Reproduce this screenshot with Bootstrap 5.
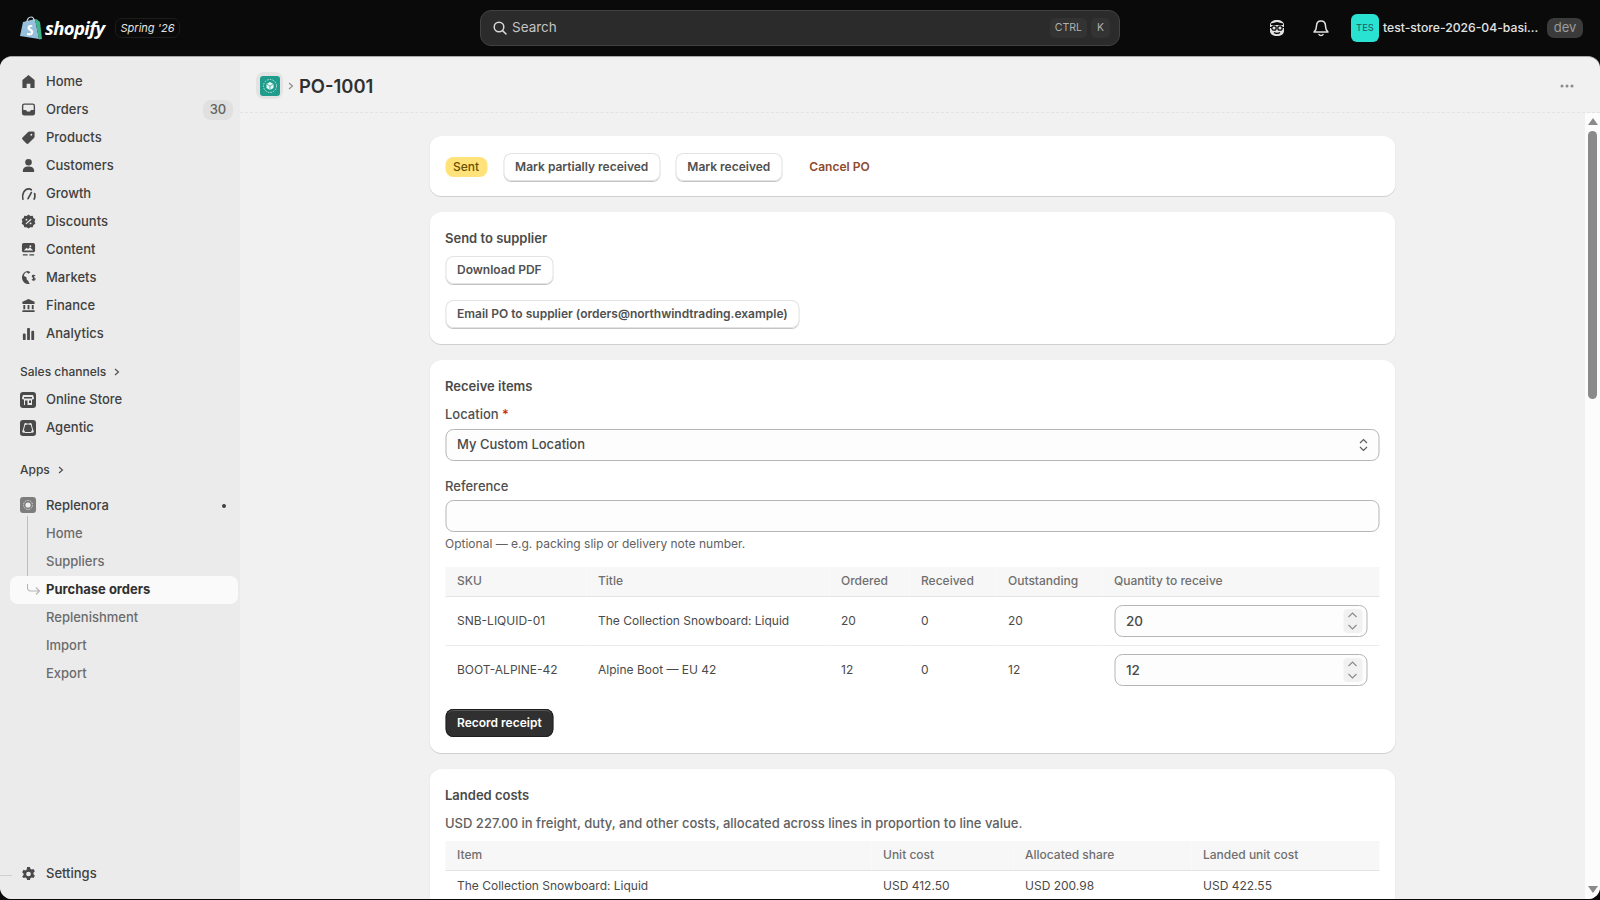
<!DOCTYPE html>
<html lang="en">
<head>
    <meta charset="UTF-8">
    <title>PO-1001</title>
    <link rel="stylesheet" href="https://cdn.jsdelivr.net/npm/bootstrap@5.3.0/dist/css/bootstrap.min.css">
    <style>
        html, body { height: 100%; overflow: hidden; }
        body { background: #0a0a0a; font-family: Inter, "Liberation Sans", sans-serif; font-size: 13px; color: #303030; }

        .topbar { height: 56px; padding: 0 17px 0 20px; color: #e3e3e3; }
        .logo-bag { width: 22px; height: 24px; }
        .logo-word { width: 62px; margin-left: 3px; font-family: "Open Sans", sans-serif; font-weight: 700; font-style: italic; font-size: 18.5px; letter-spacing: -.6px; color: #fff; line-height: 1; }
        .season-pill { width: 65px; height: 20px; margin-left: 8px; border: 1px solid #1c1c1c; border-radius: 7px; font-size: 11px; font-style: italic; color: #e3e3e3; }
        .search-wrap { left: 480px; top: 10px; width: 640px; height: 36px; background: #2b2b2b; border: 1px solid #424242; border-radius: 11px; padding: 0 9px 0 12px; color: #c4c4c4; font-size: 13.5px; line-height: 1; }
        .search-key { height: 20px; padding: 0 5px; background: #333; border-radius: 5px; font-size: 10.5px; color: #b0b0b0; }
        .top-icon { width: 18px; height: 18px; }
        .store-tile { width: 28px; height: 28px; background: #2ae2d2; border-radius: 6px; font-size: 9.5px; color: #23585a; }
        .store-name { width: 155px; margin-left: 4px; font-size: 12.2px; font-weight: 500; white-space: nowrap; }
        .dev-pill { width: 36px; height: 20px; margin-left: 9px; background: #3b3b3b; border-radius: 7px; color: #9c9c9c; font-size: 13px; }

        .frame { height: 843px; background: #f1f1f1; border-top: 1px solid #a8a8a8; border-radius: 12px; overflow: hidden; }
        .side { width: 240px; flex: none; background: #ebebeb; padding-top: 10.5px; position: relative; }
        .side::after { content: ""; position: absolute; left: 0; bottom: 23px; width: 12px; height: 1px; background: #cfcfcf; }
        .side-link { height: 28px; flex: none; padding-left: 21px; font-weight: 500; color: #404040; line-height: 1; text-decoration: none; }
        .side-icon { width: 15px; height: 15px; margin-right: 10px; flex: none; color: #4a4a4a; }
        .side-tile { width: 16px; height: 16px; margin-left: -1px; margin-right: 10px; flex: none; }
        .side-count { right: 7px; top: 4px; width: 30px; height: 20px; background: #e0e0e0; border-radius: 8px; color: #616161; }
        .side-head { padding-left: 20px; font-size: 12px; font-weight: 500; color: #404040; height: 20px; flex: none; }
        .sub-link { height: 28px; flex: none; padding-left: 46px; color: #6b6b6b; font-weight: 450; text-decoration: none; }
        .sub-active { margin: 0 2px 0 10px; padding-left: 36px; background: #fafafa; border-radius: 8px; color: #303030; font-weight: 650; }
        .tree-line { left: 27px; top: 25px; width: 1px; height: 69px; background: #bdbdbd; }
        .tree-arrow { left: 17px; top: 8px; width: 14px; height: 14px; }
        .side-dot { right: 14px; top: 13px; width: 4px; height: 4px; background: #404040; border-radius: 50%; }
        .side-foot { margin-top: 171px; }

        .page-head { height: 56px; flex: none; border-bottom: 1px dashed #e3e3e3; padding: 2px 26px 0 16px; }
        .app-tile { width: 27px; height: 27px; background: #e3e3e3; border-radius: 8px; }
        .crumb-sep { margin: 0 5px; }
        .page-title { font-size: 18.4px; font-weight: 600; color: #303030; line-height: 1; margin: 1px 0 0; }

        .scroll-area { min-width: 0; overflow: hidden; }
        .paper-col { width: 966px; margin: 23px auto 0; transform: translateX(-.5px); }
        .panel { background: #fff; border-radius: 12px; box-shadow: 0 1px 0 #d0d0d0, 0 0 1px rgba(0,0,0,.06); padding: 17px 16px 16px; margin-bottom: 16px; }
        .panel-title { font-size: 13px; font-weight: 600; color: #4a4a4a; line-height: 18px; margin: 0; }
        .po-btn { height: 28px; padding: 0 12px; background: #fff; border: 0; border-radius: 8px; font-size: 12px; font-weight: 600; color: #505050; box-shadow: inset 0 0 0 1px #e3e3e3, 0 1px 0 #c4c4c4; }
        .po-btn-dark { background: #303030; color: #fff; box-shadow: inset 0 0 0 1px #1f1f1f, inset 0 2px 0 #555; }
        .sent-tag { height: 20px; padding: 0 8px; background: #ffe37a; border-radius: 8px; font-size: 12px; font-weight: 500; color: #6a4f00; }
        .cancel-link { font-size: 12px; font-weight: 600; color: #8e4a2c; }
        .field-label { font-size: 13px; color: #4f4f4f; font-weight: 450; line-height: 18px; }
        .cost-note { color: #616161; }
        .field-box { height: 32px; background: #fdfdfd; border: 1px solid #b5b5b5; border-radius: 8px; padding: 0 11px; color: #4a4a4a; font-weight: 450; }
        .help-line { font-size: 12px; color: #616161; line-height: 16px; }
        .po-table { width: 100%; border-collapse: collapse; font-size: 12px; color: #4a4a4a; table-layout: fixed; }
        .po-table th { background: #f7f7f7; height: 29px; border-bottom: 1px solid #e3e3e3; padding: 0 12px; font-weight: 550; color: #6f6f6f; }
        .po-table td { border-bottom: 1px solid #ebebeb; padding: 8px 12px; line-height: 18px; }
        .po-table tr:last-child td { border-bottom: 0; }
        .cost-table td { padding: 6px 12px; }
        .qty-box { height: 32px; font-size: 13.5px; }
        .qty-spin { right: 4px; top: 3px; width: 19px; height: 24px; background: #f1f1f1; border-radius: 4px; }

        .fake-scroll { width: 15px; flex: none; background: #fcfcfc; padding: 5px 0 6px; }
        .scroll-thumb { width: 9px; height: 268px; margin-top: 6px; background: #8a8a8a; border-radius: 5px; }
    </style>
</head>
<body>
    <header class="topbar position-relative d-flex align-items-center">
        <svg class="logo-bag" viewBox="0 0 22 24">
            <path d="M3 6 15 3l4 20-19-3z" fill="#95bfdc"/>
            <path d="M15 3l2 .5 3 2.500 2 17-3 .5z" fill="#3fb58a"/>
            <path d="M7 6c0-3 2-5 4-5s3 2 3 4" fill="none" stroke="#c9d9e2" stroke-width="1.200"/>
            <path d="M12.500 9.500c-2.500-1-5 0-5 2.500 0 2.500 3.500 2.500 3.500 4.200 0 1.300-2 1.500-3.500.5l-.7 2c2.500 1.500 6.500.7 6.500-2.700 0-3-3.500-3-3.500-4.500 0-.8 1.200-1 2.300-.4z" fill="#fff"/>
        </svg>
        <span class="logo-word">shopify</span>
        <span class="season-pill d-flex align-items-center justify-content-center">Spring '26</span>

        <div class="search-wrap position-absolute d-flex align-items-center">
            <svg width="14" height="14" viewBox="0 0 14 14" fill="none" stroke="#d8d8d8" stroke-width="1.500"><circle cx="6" cy="6" r="4.800"/><path d="M9.600 9.600 13 13" stroke-linecap="round"/></svg>
            <span style="margin-left:5px">Search</span>
            <span class="search-key d-flex align-items-center ms-auto">CTRL</span>
            <span class="search-key d-flex align-items-center ms-1" style="padding:0 6px">K</span>
        </div>

        <div class="d-flex align-items-center ms-auto">
            <svg class="top-icon" viewBox="0 0 18 18">
                <path d="M2 6c0-3 3-5 7-5s7 2 7 5v6c0 3-3 5-7 5s-7-2-7-5z" fill="#e3e3e3"/>
                <path d="M3 4.500 9 3l6 1.500V6H3z" fill="#0a0a0a"/>
                <circle cx="6" cy="9" r="2.200" fill="#e3e3e3" stroke="#0a0a0a" stroke-width="1.300"/>
                <circle cx="12" cy="9" r="2.200" fill="#e3e3e3" stroke="#0a0a0a" stroke-width="1.300"/>
                <path d="M2 8.500h2M14 8.500h2" stroke="#0a0a0a" stroke-width="1.200"/>
                <path d="M6 13.500c1.500 1.300 4.500 1.300 6 0" fill="none" stroke="#0a0a0a" stroke-width="1.300"/>
            </svg>
            <svg class="top-icon" style="margin-left:26px" viewBox="0 0 18 18" fill="none" stroke="#e3e3e3" stroke-width="1.500" stroke-linejoin="round">
                <path d="M9 2c-3 0-4.500 2.300-4.500 5 0 3-.8 4.500-2.500 6h14c-1.700-1.500-2.500-3-2.500-6 0-2.700-1.500-5-4.500-5z"/>
                <path d="M7 15.500c.6 1.300 3.400 1.300 4 0" stroke-linecap="round"/>
            </svg>
            <span class="store-tile d-flex align-items-center justify-content-center" style="margin-left:21px">TES</span>
            <span class="store-name">test-store-2026-04-basi...</span>
            <span class="dev-pill d-flex align-items-center justify-content-center">dev</span>
        </div>
    </header>

    <div class="frame d-flex">
        <nav class="side d-flex flex-column">
            <a class="side-link d-flex align-items-center">
                <svg class="side-icon" viewBox="0 0 16 16" fill="currentColor"><path d="M8 1 1.500 6.500V14a1 1 0 0 0 1 1H6v-4.500h4V15h3.500a1 1 0 0 0 1-1V6.500z"/></svg>Home</a>
            <a class="side-link d-flex align-items-center position-relative">
                <svg class="side-icon" viewBox="0 0 16 16"><path fill="currentColor" fill-rule="evenodd" d="M3.500 1.500h9a2.500 2.500 0 0 1 2.500 2.500v8a2.500 2.500 0 0 1-2.500 2.500h-9A2.500 2.500 0 0 1 1 12V4a2.500 2.500 0 0 1 2.500-2.500zm0 1.500a1 1 0 0 0-1 1v4.500H5c.5 0 .8.300 1 .8l.3.700h3.400l.3-.7c.2-.5.5-.8 1-.8h2.500V4a1 1 0 0 0-1-1z"/></svg>Orders<span class="side-count position-absolute d-flex align-items-center justify-content-center">30</span></a>
            <a class="side-link d-flex align-items-center">
                <svg class="side-icon" viewBox="0 0 16 16" fill="currentColor"><path fill-rule="evenodd" d="M9 1.500h4a1.500 1.500 0 0 1 1.500 1.500v4c0 .5-.2 1-.6 1.400l-6 6a1.500 1.500 0 0 1-2.100 0l-4.200-4.200a1.500 1.500 0 0 1 0-2.100l6-6C8 1.700 8.500 1.500 9 1.500zM11 4a1 1 0 1 0 0 2 1 1 0 0 0 0-2z"/></svg>Products</a>
            <a class="side-link d-flex align-items-center">
                <svg class="side-icon" viewBox="0 0 16 16" fill="currentColor"><circle cx="8" cy="4.500" r="3.500"/><path d="M2 15v-1.500C2 10.500 4.500 9 8 9s6 1.500 6 4.500V15z"/></svg>Customers</a>
            <a class="side-link d-flex align-items-center">
                <svg class="side-icon" viewBox="0 0 16 16" fill="none" stroke="currentColor" stroke-width="1.800" stroke-linecap="round"><path d="M2 14C.8 9 3.500 3 8 3c1.300 0 2.300.4 3 1"/><path d="M14.500 8c.5 2 .3 4.500-.5 6"/><path d="M7.500 13.500 11 7"/></svg>Growth</a>
            <a class="side-link d-flex align-items-center">
                <svg class="side-icon" viewBox="0 0 16 16" fill="currentColor"><path fill-rule="evenodd" d="M8 .500l2 1.500 2.500-.2.700 2.500 2.100 1.300-.8 2.400.8 2.400-2.100 1.300-.7 2.500-2.500-.2-2 1.500-2-1.500-2.500.2-.7-2.500L.7 10.400 1.500 8 .7 5.600l2.100-1.300.7-2.500 2.500.2zM5.800 5a1 1 0 1 0 0 2 1 1 0 0 0 0-2zm4.400 4a1 1 0 1 0 0 2 1 1 0 0 0 0-2zm.2-4L4.800 10l.9 1 5.600-5z"/></svg>Discounts</a>
            <a class="side-link d-flex align-items-center">
                <svg class="side-icon" viewBox="0 0 16 16" fill="currentColor"><path fill-rule="evenodd" d="M3 1h10a2 2 0 0 1 2 2v6a2 2 0 0 1-2 2H3a2 2 0 0 1-2-2V3a2 2 0 0 1 2-2zm7 2.500a1 1 0 1 0 0 2 1 1 0 0 0 0-2zM3 9h10L9.500 5.500 7.500 7.500 6 6z"/><path d="M2 13h5v1.500H2zM9 13h5v1.500H9z"/></svg>Content</a>
            <a class="side-link d-flex align-items-center">
                <svg class="side-icon" viewBox="0 0 16 16" fill="currentColor"><path d="M7.500 1A7 7 0 0 0 1 8a7 7 0 0 0 7 7c.6 0 1-.1 1.500-.2A4 4 0 0 1 8 12l-2-2V8L3 6c.5-2 2-3.200 3-3.500L8 4l2-1.500A7 7 0 0 0 7.500 1z"/><path d="M15 6.500c-.5-1-2.800-1.200-3 .2-.2 1.500 3 1.300 3 3 0 1.400-2.500 1.300-3.300.3M13.300 5v6.500" fill="none" stroke="currentColor" stroke-width="1.200"/></svg>Markets</a>
            <a class="side-link d-flex align-items-center">
                <svg class="side-icon" viewBox="0 0 16 16" fill="currentColor"><path d="M8 1 14.500 4v2.500h-13V4zM2.500 7.500h2V12h-2zM7 7.500h2V12H7zM11.500 7.500h2V12h-2zM1.500 13h13v2h-13z"/></svg>Finance</a>
            <a class="side-link d-flex align-items-center">
                <svg class="side-icon" viewBox="0 0 16 16" fill="currentColor"><rect x="2" y="8" width="3" height="7" rx="1"/><rect x="6.500" y="2" width="3" height="13" rx="1"/><rect x="11" y="5" width="3" height="10" rx="1"/></svg>Analytics</a>

            <div class="side-head d-flex align-items-center" style="margin-top:14px;margin-bottom:4px">Sales channels
                <svg class="ms-2" width="6" height="8" viewBox="0 0 6 8" fill="none" stroke="#4a4a4a" stroke-width="1.100"><path d="M1 1l3.500 3L1 7"/></svg></div>
            <a class="side-link d-flex align-items-center">
                <svg class="side-tile" viewBox="0 0 16 16"><rect width="16" height="16" rx="3" fill="#4a4a4a"/><path d="M3 3h10l1 3c0 1-1 1.500-2 1.500v5.500H4V7.500C3 7.500 2 7 2 6z" fill="#ebebeb"/><path d="M5 8.500h2.500V13H5zM9 8.500h2V11H9zM4 5h8v1.500H4z" fill="#4a4a4a"/></svg>Online Store</a>
            <a class="side-link d-flex align-items-center">
                <svg class="side-tile" viewBox="0 0 16 16"><rect width="16" height="16" rx="3" fill="#4a4a4a"/><path d="M5 4h6l2 7-2 1.500H5L3 11z" fill="none" stroke="#ebebeb" stroke-width="1"/><circle cx="3.500" cy="11.500" r="1.200" fill="#ebebeb"/><circle cx="12.500" cy="11.500" r="1.200" fill="#ebebeb"/><circle cx="5.500" cy="4" r="1.100" fill="#ebebeb"/><circle cx="10.500" cy="4" r="1.100" fill="#ebebeb"/></svg>Agentic</a>

            <div class="side-head d-flex align-items-center" style="margin-top:18.5px;margin-bottom:11px">Apps
                <svg class="ms-2" width="6" height="8" viewBox="0 0 6 8" fill="none" stroke="#4a4a4a" stroke-width="1.100"><path d="M1 1l3.500 3L1 7"/></svg></div>

            <div class="position-relative">
                <a class="side-link d-flex align-items-center position-relative" style="margin-bottom:1px">
                    <svg class="side-tile" viewBox="0 0 16 16"><rect width="16" height="16" rx="3" fill="#7d7d7d"/><circle cx="8" cy="8" r="4.500" fill="none" stroke="#d8d8d8" stroke-dasharray="1.500 1"/><circle cx="8" cy="8" r="2.600" fill="#f0f0f0"/></svg>Replenora<span class="side-dot position-absolute"></span></a>
                <div class="tree-line position-absolute"></div>
                <a class="sub-link d-flex align-items-center">Home</a>
                <a class="sub-link d-flex align-items-center">Suppliers</a>
                <a class="sub-link sub-active d-flex align-items-center position-relative">
                    <svg class="tree-arrow position-absolute" viewBox="0 0 14 14" fill="none" stroke="#b5b5b5" stroke-width="1.100"><path d="M.5 0v4a3 3 0 0 0 3 3h9M9 3.500l3.500 3.500L9 10.500"/></svg>Purchase orders</a>
                <a class="sub-link d-flex align-items-center">Replenishment</a>
                <a class="sub-link d-flex align-items-center">Import</a>
                <a class="sub-link d-flex align-items-center">Export</a>
            </div>

            <a class="side-link side-foot d-flex align-items-center">
                <svg class="side-icon" viewBox="0 0 16 16" fill="currentColor"><path fill-rule="evenodd" d="M6.500 1h3l.5 2 1.300.7 2-.6 1.500 2.600-1.500 1.400v1.800l1.500 1.400-1.500 2.600-2-.6-1.300.7-.5 2h-3l-.5-2-1.300-.7-2 .6L1.200 11.300l1.500-1.400V8.100L1.200 6.700l1.500-2.600 2 .6L6 4zM8 6a2.500 2.500 0 1 0 0 5 2.500 2.500 0 0 0 0-5z"/></svg>Settings</a>
        </nav>

        <main class="flex-grow-1 d-flex flex-column" style="min-width:0">
            <div class="page-head d-flex align-items-center">
                <span class="app-tile d-flex align-items-center justify-content-center">
                    <svg width="20" height="20" viewBox="0 0 20 20"><rect width="20" height="20" rx="3" fill="#1f9c8c"/><circle cx="10" cy="10" r="6.500" fill="none" stroke="#bfe8df" stroke-width="1" stroke-dasharray="1.500 1.200"/><path d="M10 6l3.500 2v4L10 14l-3.500-2V8z" fill="#eafaf6"/><path d="M6.500 8 10 10l3.500-2M10 10v4" fill="none" stroke="#1f9c8c" stroke-width=".7"/></svg>
                </span>
                <svg class="crumb-sep" width="6" height="10" viewBox="0 0 6 10" fill="none" stroke="#8a8a8a" stroke-width="1.100"><path d="M1 2 4.500 5 1 8"/></svg>
                <h1 class="page-title">PO-1001</h1>
                <svg class="ms-auto" width="14" height="4" viewBox="0 0 14 4" fill="#8a8a8a"><circle cx="2" cy="2" r="1.500"/><circle cx="7" cy="2" r="1.500"/><circle cx="12" cy="2" r="1.500"/></svg>
            </div>

            <div class="d-flex flex-grow-1" style="min-height:0">
                <div class="scroll-area flex-grow-1">
                    <div class="paper-col">
                        <section class="panel d-flex align-items-center" style="height:60px">
                            <span class="sent-tag d-flex align-items-center">Sent</span>
                            <button class="po-btn" style="margin-left:16px">Mark partially received</button>
                            <button class="po-btn" style="margin-left:15px">Mark received</button>
                            <span class="cancel-link" style="margin-left:27px">Cancel PO</span>
                        </section>

                        <section class="panel" style="height:132px">
                            <h2 class="panel-title" style="margin-bottom:9px">Send to supplier</h2>
                            <button class="po-btn d-block">Download PDF</button>
                            <button class="po-btn d-block" style="margin-top:16px">Email PO to supplier (orders@northwindtrading.example)</button>
                        </section>

                        <section class="panel" style="height:393px">
                            <h2 class="panel-title">Receive items</h2>
                            <div class="field-label" style="margin-top:10px;margin-bottom:6px">Location <span style="color:#c5280c">*</span></div>
                            <div class="field-box d-flex align-items-center justify-content-between">My Custom Location
                                <svg style="margin-right:-1px" width="10" height="14" viewBox="0 0 10 14" fill="none" stroke="#5c5c5c" stroke-width="1.200"><path d="M1.500 5 5 1.500 8.500 5M1.500 9 5 12.500 8.500 9"/></svg>
                            </div>
                            <div class="field-label" style="margin-top:16px;margin-bottom:5px">Reference</div>
                            <div class="field-box"></div>
                            <div class="help-line" style="margin-top:4px;margin-bottom:15px">Optional — e.g. packing slip or delivery note number.</div>

                            <table class="po-table text-start">
                                <colgroup><col style="width:141px"><col style="width:243px"><col style="width:80px"><col style="width:87px"><col style="width:106px"><col></colgroup>
                                <thead><tr><th>SKU</th><th>Title</th><th>Ordered</th><th>Received</th><th>Outstanding</th><th>Quantity to receive</th></tr></thead>
                                <tbody>
                                    <tr><td>SNB-LIQUID-01</td><td>The Collection Snowboard: Liquid</td><td>20</td><td>0</td><td>20</td>
                                        <td><div class="field-box qty-box position-relative d-flex align-items-center">20
                                            <span class="qty-spin position-absolute d-flex flex-column align-items-center justify-content-around"><svg width="10" height="6" viewBox="0 0 10 6" fill="none" stroke="#8a8a8a" stroke-width="1.100"><path d="M1 5l4-4 4 4"/></svg><svg width="10" height="6" viewBox="0 0 10 6" fill="none" stroke="#8a8a8a" stroke-width="1.100"><path d="M1 1l4 4 4-4"/></svg></span></div></td></tr>
                                    <tr><td>BOOT-ALPINE-42</td><td>Alpine Boot — EU 42</td><td>12</td><td>0</td><td>12</td>
                                        <td><div class="field-box qty-box position-relative d-flex align-items-center">12
                                            <span class="qty-spin position-absolute d-flex flex-column align-items-center justify-content-around"><svg width="10" height="6" viewBox="0 0 10 6" fill="none" stroke="#8a8a8a" stroke-width="1.100"><path d="M1 5l4-4 4 4"/></svg><svg width="10" height="6" viewBox="0 0 10 6" fill="none" stroke="#8a8a8a" stroke-width="1.100"><path d="M1 1l4 4 4-4"/></svg></span></div></td></tr>
                                </tbody>
                            </table>
                            <button class="po-btn po-btn-dark d-block" style="margin-top:15px">Record receipt</button>
                        </section>

                        <section class="panel">
                            <h2 class="panel-title">Landed costs</h2>
                            <p class="field-label cost-note" style="margin:10px 0 9px">USD 227.00 in freight, duty, and other costs, allocated across lines in proportion to line value.</p>
                            <table class="po-table cost-table text-start">
                                <colgroup><col style="width:426px"><col style="width:142px"><col style="width:178px"><col></colgroup>
                                <thead><tr><th>Item</th><th>Unit cost</th><th>Allocated share</th><th>Landed unit cost</th></tr></thead>
                                <tbody><tr><td>The Collection Snowboard: Liquid</td><td>USD 412.50</td><td>USD 200.98</td><td>USD 422.55</td></tr></tbody>
                            </table>
                        </section>
                    </div>
                </div>
                <div class="fake-scroll d-flex flex-column align-items-center">
                    <svg width="10" height="7" viewBox="0 0 10 7" fill="#8a8a8a"><path d="M5 0l5 7H0z"/></svg>
                    <div class="scroll-thumb"></div>
                    <svg class="mt-auto" width="10" height="7" viewBox="0 0 10 7" fill="#8a8a8a"><path d="M5 7 10 0H0z"/></svg>
                </div>
            </div>
        </main>
    </div>
</body>
</html>
